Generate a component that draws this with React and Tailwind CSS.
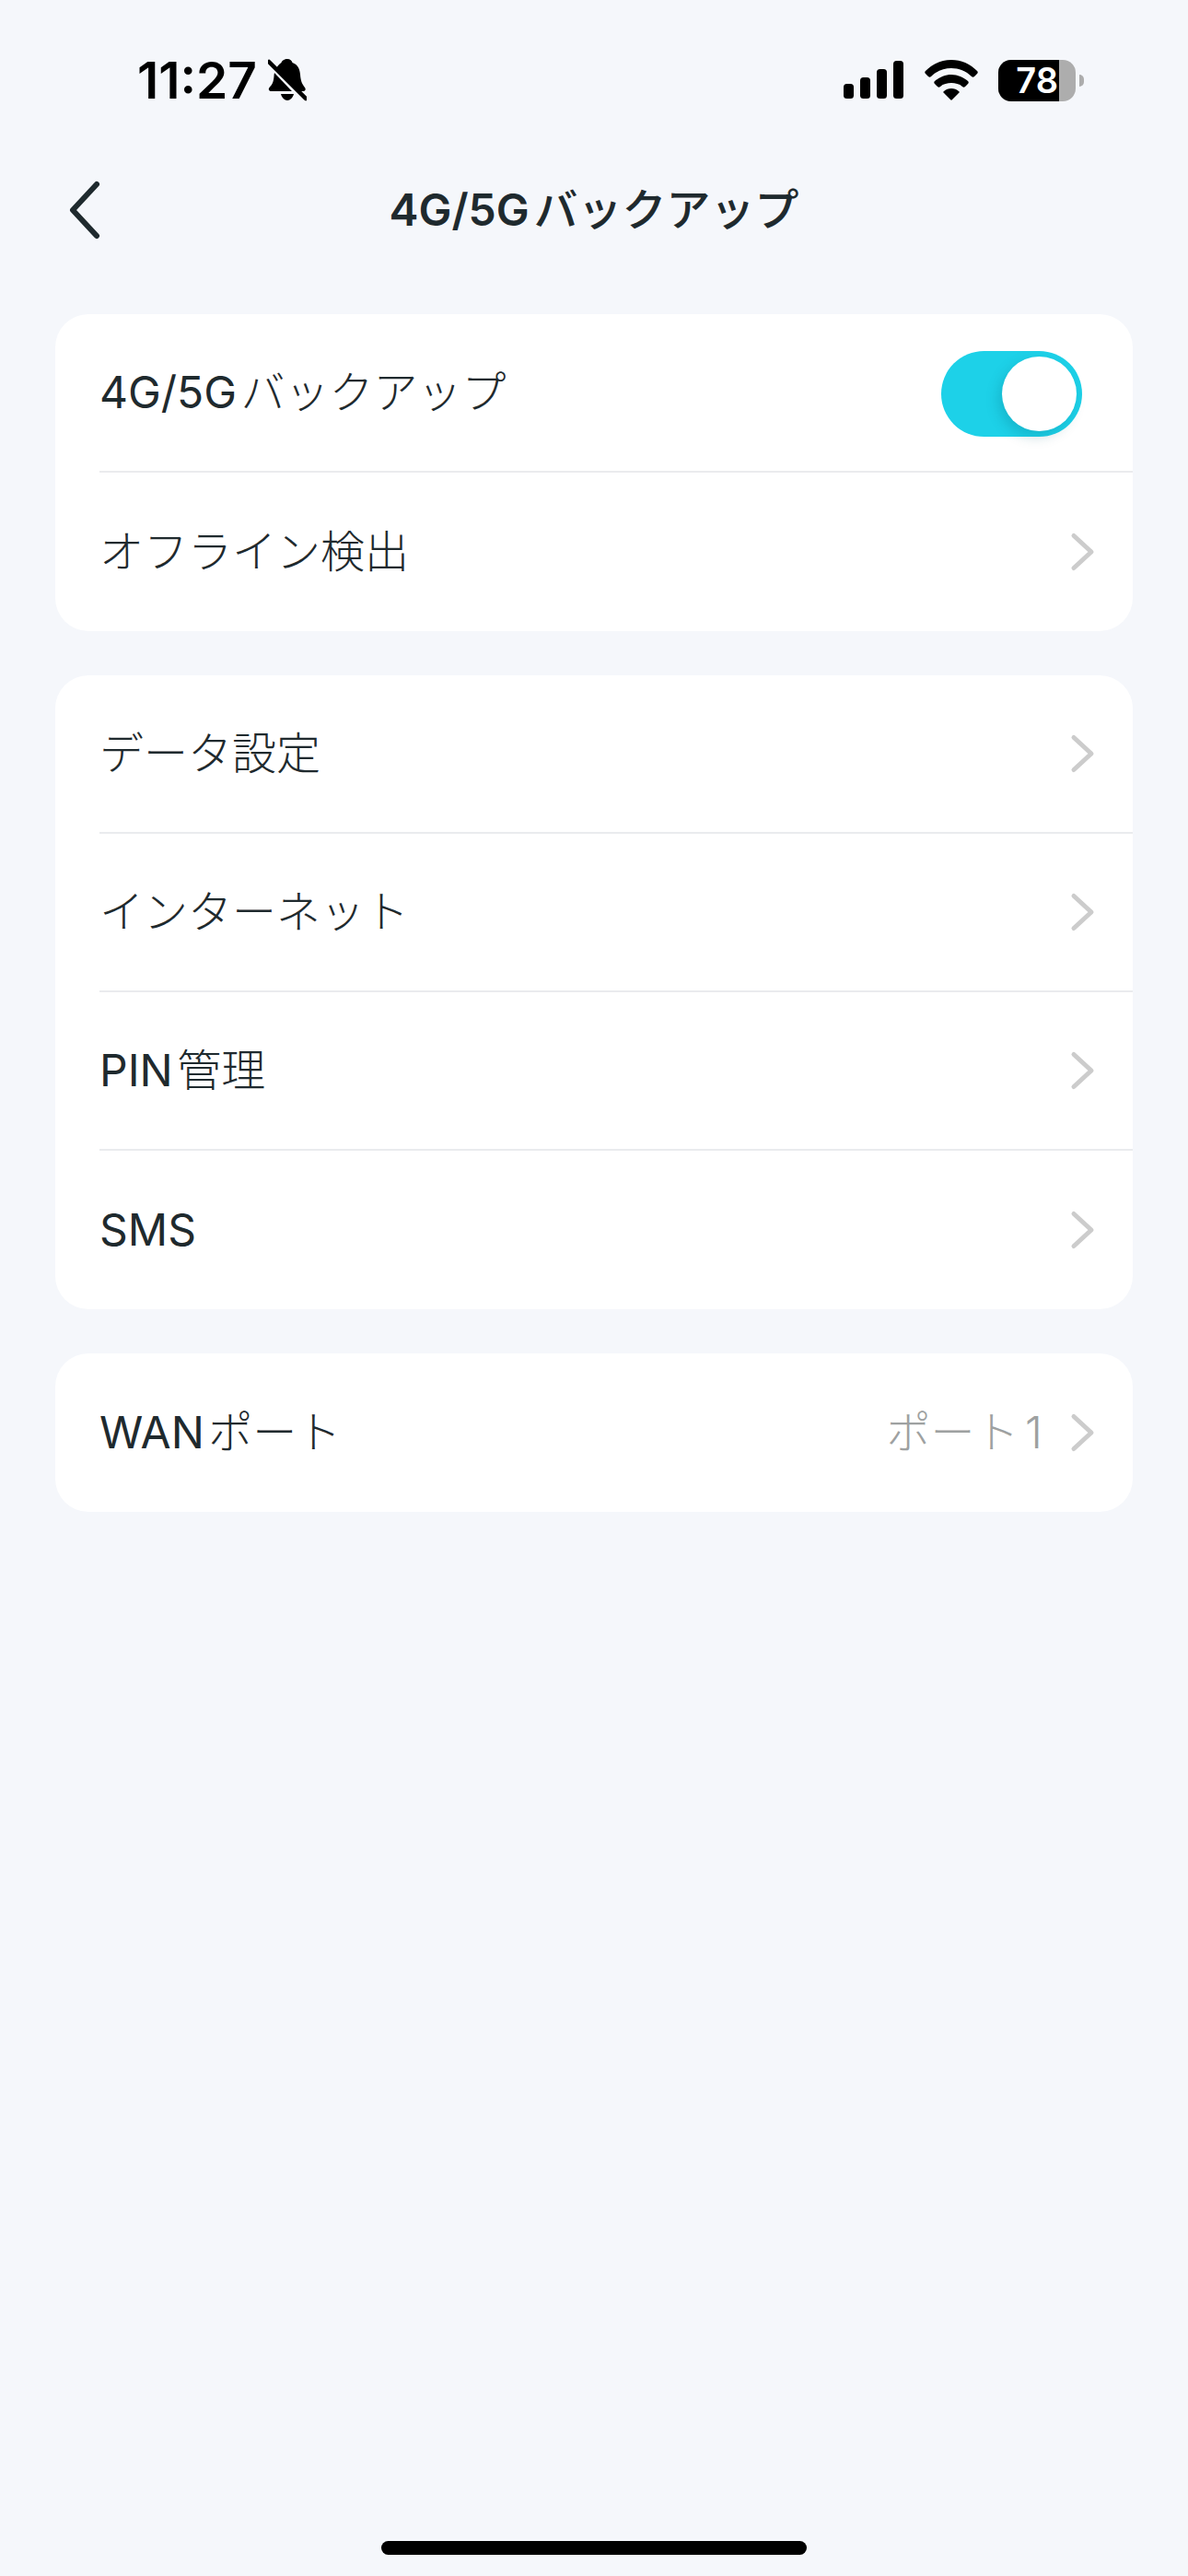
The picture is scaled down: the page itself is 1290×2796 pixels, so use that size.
import React from "react";

const font = "font-['Inter','Noto_Sans_CJK_JP',sans-serif]";

const Chevron = () => (
  <svg width="32" height="48" viewBox="0 0 32 48" fill="none" className="shrink-0">
    <path d="M8 6.500 L27 24 L8 41.500" stroke="#cccccc" strokeWidth="5" strokeLinecap="round" strokeLinejoin="round" />
  </svg>
);

const Latin = ({ children }) => <span className="font-normal">{children}</span>;

const Row = ({ label, value, last, children }) => (
  <div className="pl-[48px]">
    <div className={`h-[172px] flex items-center justify-between pr-[40px] ${last ? "" : "border-b-2 border-[#eaebee]"}`}>
      <span className="text-[48px] leading-none font-light text-[#1f2a2e] [word-spacing:-9px]">{label}</span>
      {children || (
        <div className="flex items-center gap-[26px]">
          {value && <span className="text-[48px] leading-none font-light text-[#9ea1a1] [word-spacing:-7px]">{value}</span>}
          <Chevron />
        </div>
      )}
    </div>
  </div>
);

const Card = ({ children }) => (
  <div className="bg-white rounded-[36px] overflow-hidden">{children}</div>
);

const Toggle = () => (
  <div className="w-[153px] h-[93px] mt-[3px] mr-[15px] rounded-full bg-[#1dd1e8] flex items-center justify-end pr-[6px]">
    <div className="w-[81px] h-[81px] rounded-full bg-white shadow-[-4px_6px_14px_rgba(0,90,110,0.22)]" />
  </div>
);

export default function App() {
  return (
    <div className={`${font} w-[1290px] min-h-[2796px] bg-[#f5f7fb] flex flex-col`}>
      <div className="h-[116px] pt-[58px] flex items-center justify-between pl-[149px] pr-[113px]">
        <div className="flex items-center gap-[12px]">
          <span className="text-[55px] leading-[54px] font-semibold text-black">11:27</span>
          <svg width="42" height="46" viewBox="0 0 42 46" fill="none">
            <path d="M21 0c3 0 5 2 5.500 4 6 2 8 7 8.500 13 .5 7 2 10 5 14 1.500 2 .5 4-2 4H4c-3 0-4-2-2.500-4 3-3 4.500-6 5-12 .3-6 2.500-11 8-15 .5-2 3.500-4 6.500-4Z" fill="black" />
            <path d="M14 38h14c-1 4-4 7-7 7s-6-3-7-7Z" fill="black" />
            <path d="M-2 2 L38 44" stroke="#f5f7fb" strokeWidth="5" />
            <path d="M1 3 L41 43" stroke="black" strokeWidth="4.500" strokeLinecap="round" />
          </svg>
        </div>
        <div className="flex items-center gap-[22px]">
          <svg width="66" height="42" viewBox="0 0 66 42" fill="black">
            <rect x="0" y="25" width="11" height="16" rx="3.500" />
            <rect x="18" y="18" width="11" height="23" rx="3.500" />
            <rect x="36" y="9" width="11" height="32" rx="3.500" />
            <rect x="54" y="0" width="11" height="41" rx="3.500" />
          </svg>
          <svg width="58" height="44" viewBox="0 0 58 44" fill="black">
            <path d="M29 0C18 0 9 4 1 12 0 13 0 14 1 15L4 18C5 19 6 19 7 18 13 12 21 9 29 9 37 9 45 12 51 18 52 19 53 19 54 18L57 15C58 14 58 13 57 12 49 4 40 0 29 0Z" />
            <path d="M29 16C22 16 16 19 11 23 10 24 10 25 11 26L14 29C15 30 16 30 17 29 20 26 25 25 29 25 33 25 38 26 41 29 42 30 43 30 44 29L47 26C48 25 48 24 47 23 42 19 36 16 29 16Z" />
            <path d="M29 31C26 31 23 32 21 34 20 35 20 35 21 36L28 43C28.500 44 29.500 44 30 43L37 36C38 35 38 35 37 34 35 32 32 31 29 31Z" />
          </svg>
          <div className="flex items-center gap-[4px]">
            <div className="w-[84px] h-[45px] rounded-[14px] overflow-hidden flex bg-[#adadad]">
              <div className="w-[66px] h-full bg-black flex items-center justify-end pr-[1px]">
                <span className="text-[38px] leading-[45px] font-semibold text-white">78</span>
              </div>
            </div>
            <div className="w-[5px] h-[13px] rounded-r-full bg-[#adadad]" />
          </div>
        </div>
      </div>

      <div className="relative h-[111px] mt-[56px] flex items-center justify-center">
        <svg width="36" height="66" viewBox="0 0 36 66" fill="none" className="absolute left-[74px] top-[23px]">
          <path d="M31 5 L5 33 L31 61" stroke="#1f2a2e" strokeWidth="6" strokeLinecap="round" strokeLinejoin="round" />
        </svg>
        <span className="text-[48px] leading-none font-medium text-[#1f2a2e] [word-spacing:-8px]">
          <span className="font-semibold">4G/5G</span> バックアップ
        </span>
      </div>

      <div className="px-[60px] mt-[58px] flex flex-col gap-[48px]">
        <Card>
          <Row label={<><Latin>4G/5G</Latin> バックアップ</>}><Toggle /></Row>
          <Row label="オフライン検出" last />
        </Card>
        <Card>
          <Row label="データ設定" />
          <Row label="インターネット" />
          <Row label={<><Latin>PIN</Latin> 管理</>} />
          <Row label={<Latin>SMS</Latin>} last />
        </Card>
        <Card>
          <Row label={<><Latin>WAN</Latin> ポート</>} value="ポート 1" last />
        </Card>
      </div>

      <div className="mt-auto pb-[23px] flex justify-center">
        <div className="w-[462px] h-[15px] rounded-full bg-black" />
      </div>
    </div>
  );
}
